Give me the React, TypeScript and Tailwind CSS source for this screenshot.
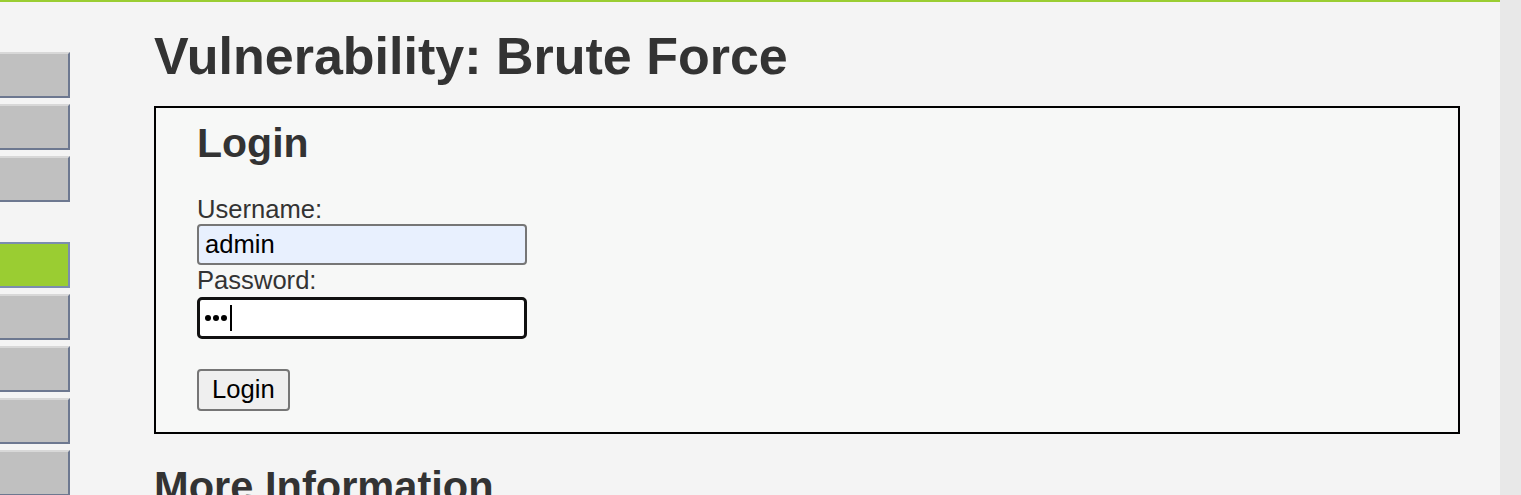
import React from 'react';

const FONT = { fontFamily: '"Liberation Sans", Arial, Helvetica, sans-serif' };

function MenuButton({ active = false }: { active?: boolean }) {
  if (active) {
    return (
      <div className="mb-[6px] h-[46px] w-[70px] border-y-2 border-r-2 border-[#7b8daf] bg-[#9acd32]" />
    );
  }
  return (
    <div className="mb-[6px] h-[46px] w-[70px] border-t-2 border-r-2 border-b-2 border-t-[#d8d8d8] border-r-[#6d7890] border-b-[#6d7890] bg-[#c0c0c0]" />
  );
}

export default function App() {
  return (
    <div className="flex h-[495px] w-[1521px] overflow-hidden text-[#333]" style={FONT}>
      <div className="flex h-full w-[1500px] flex-col bg-[#f4f4f4]">
        <div className="h-[2px] shrink-0 bg-[#9acd32]" />
        <div className="flex min-h-0 flex-1">
          {/* left menu, scrolled partly out of view */}
          <div className="w-[70px] shrink-0 pt-[50px]">
            <MenuButton />
            <MenuButton />
            <MenuButton />
            <div className="h-[34px]" />
            <MenuButton active />
            <MenuButton />
            <MenuButton />
            <MenuButton />
            <MenuButton />
          </div>

          <div className="ml-[84px] w-[1306px] shrink-0">
            <h1 className="mt-[25px] text-[52px] font-bold leading-[59px]">Vulnerability: Brute Force</h1>

            <div className="mt-[20px] border-2 border-black bg-[#f7f8f7] pb-[21px] pl-[41px] pt-[12px]">
              <h2 className="text-[41px] font-bold leading-[47px]">Login</h2>

              <form className="mt-[28px] flex flex-col items-start" onSubmit={(e) => e.preventDefault()}>
                <label className="text-[25.6px] leading-[29px]">Username:</label>
                <div className="flex h-[41px] w-[330px] items-center rounded-[4px] border-2 border-[#767676] bg-[#e8f0fe] pl-[6px] text-[25.6px] text-black">
                  admin
                </div>
                <label className="text-[25.6px] leading-[31px]">Password:</label>
                <div className="mt-[1px] flex h-[42px] w-[330px] items-center gap-[2px] rounded-[5px] border-[3px] border-[#111] bg-white pl-[5px]">
                  <span className="size-[6px] rounded-full bg-black" />
                  <span className="size-[6px] rounded-full bg-black" />
                  <span className="size-[6px] rounded-full bg-black" />
                  <span className="ml-[1px] h-[26px] w-[2px] bg-black" />
                </div>
                <button
                  type="submit"
                  className="mt-[30px] h-[42px] rounded-[4px] border-2 border-[#767676] bg-[#efefef] px-[13px] text-[25.6px] leading-none text-black"
                >
                  Login
                </button>
              </form>
            </div>

            <h3 className="mt-[29px] text-[41.6px] font-bold leading-[47px]">More Information</h3>
          </div>
        </div>
      </div>
      <div className="h-full w-[21px] bg-[#e8e8e8]" />
    </div>
  );
}
